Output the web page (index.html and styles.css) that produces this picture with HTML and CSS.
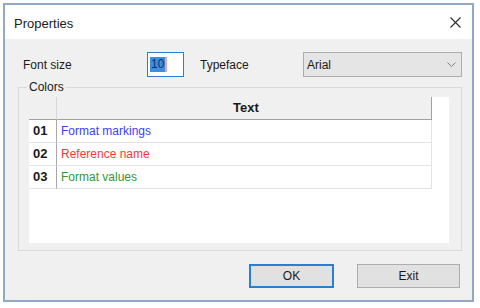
FILE: index.html
```html
<!DOCTYPE html>
<html>
<head>
<meta charset="utf-8">
<link rel="stylesheet" href="styles.css">
</head>
<body>
<div class="window">
  <div class="titlebar">
    <span class="title">Properties</span>
    <svg class="close" width="11" height="11" viewBox="0 0 11 11"><path d="M0.5 0.5 L10.5 10.5 M10.5 0.5 L0.5 10.5" stroke="#2b2b2b" stroke-width="1.1" fill="none"/></svg>
  </div>
  <div class="body">
    <div class="fields">
      <span class="lbl lbl-size">Font size</span>
      <div class="input"><span class="sel">10</span><span class="caret"></span></div>
      <span class="lbl lbl-face">Typeface</span>
      <div class="select"><span>Arial</span><svg width="9" height="5" viewBox="0 0 9 5"><path d="M0.5 0.5 L4.5 4.5 L8.5 0.5" stroke="#7a7a7a" stroke-width="1" fill="none"/></svg></div>
    </div>
    <fieldset class="group">
      <legend>Colors</legend>
      <div class="grid">
        <table class="tbl">
          <tr class="head"><th class="num"></th><th class="txt">Text</th></tr>
          <tr><td class="num">01</td><td class="txt blue">Format markings</td></tr>
          <tr><td class="num">02</td><td class="txt red">Reference name</td></tr>
          <tr><td class="num">03</td><td class="txt green">Format values</td></tr>
        </table>
      </div>
    </fieldset>
    <div class="buttons">
      <button class="btn ok">OK</button>
      <button class="btn exit">Exit</button>
    </div>
  </div>
</div>
</body>
</html>
```
FILE: styles.css
```css
body {
  margin: 0;
  background: #ffffff;
  font-family: "Liberation Sans", Arial, sans-serif;
  color: #1a1a1a;
}
.window {
  margin: 3px 0 0 3px;
  width: 467px;
  height: 295px;
  border: 2px solid #93a7c6;
  background: #f0f0f0;
  display: flex;
  flex-direction: column;
}
.titlebar {
  height: 34px;
  background: #ffffff;
  display: flex;
  align-items: center;
  justify-content: space-between;
  padding: 0 11px 0 9px;
  flex-shrink: 0;
}
.title {
  font-size: 13px;
  color: #202020;
  padding-top: 2px;
}
.close {
  display: block;
  margin-top: 1px;
}
.body {
  flex: 1;
  padding: 13px 10px 0 13px;
  display: flex;
  flex-direction: column;
}
.fields {
  display: flex;
  align-items: center;
  height: 25px;
  padding-left: 5px;
  font-size: 12px;
}
.lbl-size { width: 124px; }
.lbl-face { width: 103px; }
.input {
  box-sizing: border-box;
  width: 37px;
  height: 25px;
  border: 1px solid #2a7fd4;
  background: #ffffff;
  margin-right: 16px;
  display: flex;
  align-items: center;
  padding-left: 2px;
}
.sel {
  background: #3b8ee0;
  color: #0d2f6e;
  font-size: 12px;
  line-height: 15px;
  padding: 0 1px;
}
.caret {
  width: 2px;
  height: 15px;
  background: #f0a0a0;
}
.select {
  box-sizing: border-box;
  width: 159px;
  height: 25px;
  border: 1px solid #adadad;
  background: #e5e5e5;
  display: flex;
  align-items: center;
  justify-content: space-between;
  padding: 0 5px 0 3px;
}
.select svg { display: block; }
.group {
  margin: 3px 0 0 0;
  padding: 3px 12px 7px 10px;
  border: 1px solid #d9d9d9;
  min-width: 0;
}
.group legend {
  font-size: 12px;
  line-height: 14px;
  padding: 0 2px;
  margin-left: -2px;
}
.grid {
  background: #ffffff;
  height: 146px;
}
.tbl {
  border-collapse: separate;
  border-spacing: 0;
  font-size: 12px;
}
.tbl th, .tbl td {
  padding: 0;
  line-height: 22px;
  text-align: left;
  font-weight: normal;
}
.tbl .num {
  width: 28px;
  box-sizing: border-box;
  font-weight: bold;
  font-size: 13px;
  padding-left: 4px;
  border-right: 1px solid #a8a8a8;
  border-bottom: 1px solid #e3e3e3;
}
.tbl .txt {
  width: 375px;
  box-sizing: border-box;
  padding-left: 4px;
  border-right: 1px solid #e3e3e3;
  border-bottom: 1px solid #e3e3e3;
}
.tbl .head th {
  background: #f0f0f0;
  border-bottom: 1px solid #a0a0a0;
}
.tbl .head th.num {
  border-right: 1px solid #d8d8d8;
}
.tbl .head th.txt {
  text-align: center;
  font-weight: bold;
  font-size: 13px;
  border-right: 1px solid #a0a0a0;
}
.blue { color: #3c3cff; }
.red { color: #ff3434; }
.green { color: #2f9a2f; }
.buttons {
  margin-top: 13px;
  display: flex;
  justify-content: flex-end;
  gap: 23px;
  padding-right: 2px;
}
.btn {
  box-sizing: border-box;
  height: 24px;
  background: #e1e1e1;
  border: 1px solid #adadad;
  font-family: "Liberation Sans", Arial, sans-serif;
  font-size: 12px;
  color: #1a1a1a;
  padding: 0;
}
.ok {
  width: 85px;
  border: 2px solid #2a7fd4;
}
.exit {
  width: 103px;
}
```
